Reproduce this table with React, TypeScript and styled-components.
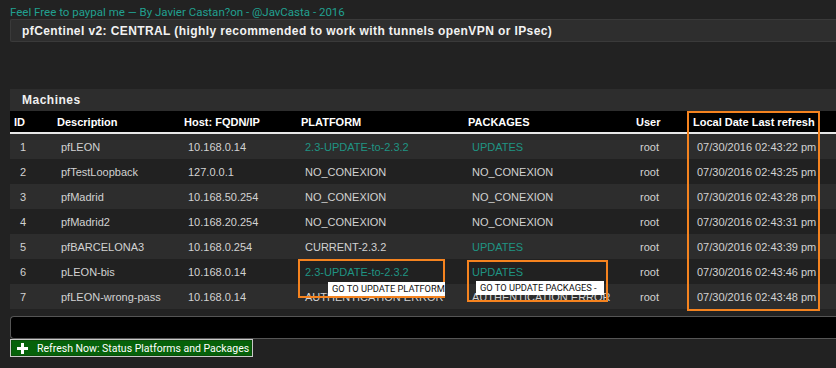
import React from 'react';
import styled, { createGlobalStyle } from 'styled-components';

const GlobalStyle = createGlobalStyle`
  html, body {
    margin: 0;
    padding: 0;
    background: #222222;
    overflow: hidden;
  }
  body {
    font-family: 'Liberation Sans', Arial, sans-serif;
    color: #d4d4d4;
  }
`;

const Page = styled.div`
  width: 836px;
  height: 368px;
  display: flex;
  flex-direction: column;
`;

const Credits = styled.div`
  font-family: Roboto, 'Liberation Sans', sans-serif;
  font-size: 11.5px;
  line-height: 13px;
  color: #21a090;
  padding: 6px 0 0 10px;
`;

const TitleBar = styled.div`
  margin-left: 10px;
  height: 21px;
  background: #2e2e2e;
  border: 1px solid #3a3a3a;
  border-right: none;
  border-radius: 2px 0 0 2px;
  display: flex;
  align-items: center;
  padding-left: 11px;
  font-size: 12px;
  font-weight: 700;
  letter-spacing: 0.4px;
  color: #f2f2f2;
  white-space: nowrap;
`;

const Panel = styled.div`
  position: relative;
  margin: 47px 0 0 10px;
  padding-bottom: 2px;
`;

const PanelHeading = styled.div`
  height: 22px;
  background: #2d2d2d;
  display: flex;
  align-items: center;
  padding-left: 12px;
  font-size: 12px;
  font-weight: 700;
  letter-spacing: 0.5px;
  color: #f0f0f0;
`;

const Table = styled.table`
  width: 100%;
  border-collapse: collapse;
  table-layout: fixed;
`;

const HeadCell = styled.th`
  background: #000;
  height: 21px;
  padding: 0 0 0 4px;
  text-align: left;
  font-size: 11px;
  font-weight: 700;
  color: #ffffff;
  border-bottom: 2px solid #e8e8e8;
  white-space: nowrap;
  overflow: hidden;
`;

const Row = styled.tr<{ $odd: boolean }>`
  background: ${({ $odd }) => ($odd ? '#2d2d2d' : '#212121')};
`;

const Cell = styled.td<{ $link?: boolean }>`
  height: 25px;
  padding: 0 0 0 8px;
  font-size: 11px;
  color: ${({ $link }) => ($link ? '#1f9483' : '#d2d2d2')};
  white-space: nowrap;
  overflow: hidden;
  &:first-child {
    padding-left: 10px;
  }
`;

const Highlight = styled.div`
  position: absolute;
  border: 2px solid #f5831f;
  box-sizing: border-box;
  pointer-events: none;
`;

const Tip = styled.div`
  position: absolute;
  background: #ffffff;
  color: #111;
  font-family: Roboto, 'Liberation Sans', sans-serif;
  font-size: 9.3px;
  line-height: 14px;
  padding: 0 0 0 4px;
  box-sizing: border-box;
  white-space: nowrap;
  overflow: hidden;
`;

const LogBox = styled.div`
  margin: 5px 0 0 10px;
  height: 21px;
  background: #000;
  border: 1px solid #555;
  border-right: none;
  border-radius: 4px 0 0 4px;
`;

const RefreshButton = styled.button`
  margin-left: 10px;
  align-self: flex-start;
  width: 243px;
  height: 18px;
  padding: 0 0 0 6px;
  display: flex;
  align-items: center;
  gap: 9px;
  background: #06620a;
  border: 1px solid #c9c9c9;
  box-shadow: inset 0 0 0 1px #0a4f0a;
  color: #ffffff;
  font-family: Roboto, 'Liberation Sans', sans-serif;
  font-size: 10.5px;
  white-space: nowrap;
  cursor: pointer;

  svg {
    flex-shrink: 0;
  }
`;

const PlusIcon = () => (
  <svg width="11" height="11" viewBox="0 0 11 11">
    <rect x="4" y="0" width="3" height="11" fill="#fff" />
    <rect x="0" y="4" width="11" height="3" fill="#fff" />
  </svg>
);

type Machine = {
  id: number;
  name: string;
  host: string;
  platform: string;
  packages: string;
  date: string;
};

const machines: Machine[] = [
  { id: 1, name: 'pfLEON', host: '10.168.0.14', platform: '2.3-UPDATE-to-2.3.2', packages: 'UPDATES', date: '07/30/2016 02:43:22 pm' },
  { id: 2, name: 'pfTestLoopback', host: '127.0.0.1', platform: 'NO_CONEXION', packages: 'NO_CONEXION', date: '07/30/2016 02:43:25 pm' },
  { id: 3, name: 'pfMadrid', host: '10.168.50.254', platform: 'NO_CONEXION', packages: 'NO_CONEXION', date: '07/30/2016 02:43:28 pm' },
  { id: 4, name: 'pfMadrid2', host: '10.168.20.254', platform: 'NO_CONEXION', packages: 'NO_CONEXION', date: '07/30/2016 02:43:31 pm' },
  { id: 5, name: 'pfBARCELONA3', host: '10.168.0.254', platform: 'CURRENT-2.3.2', packages: 'UPDATES', date: '07/30/2016 02:43:39 pm' },
  { id: 6, name: 'pLEON-bis', host: '10.168.0.14', platform: '2.3-UPDATE-to-2.3.2', packages: 'UPDATES', date: '07/30/2016 02:43:46 pm' },
  { id: 7, name: 'pfLEON-wrong-pass', host: '10.168.0.14', platform: 'AUTHENTICATION ERROR', packages: 'AUTHENTICATION ERROR', date: '07/30/2016 02:43:48 pm' },
];

const isLink = (v: string) => v.includes('UPDATE');

const App: React.FC = () => (
  <Page>
    <GlobalStyle />
    <Credits>Feel Free to paypal me — By Javier Castan?on - @JavCasta - 2016</Credits>
    <TitleBar>pfCentinel v2: CENTRAL (highly recommended to work with tunnels openVPN or IPsec)</TitleBar>

    <Panel>
      <PanelHeading>Machines</PanelHeading>
      <Table>
        <colgroup>
          <col style={{ width: 43 }} />
          <col style={{ width: 127 }} />
          <col style={{ width: 117 }} />
          <col style={{ width: 167 }} />
          <col style={{ width: 168 }} />
          <col style={{ width: 57 }} />
          <col style={{ width: 133 }} />
          <col />
        </colgroup>
        <thead>
          <tr>
            <HeadCell>ID</HeadCell>
            <HeadCell>Description</HeadCell>
            <HeadCell>Host: FQDN/IP</HeadCell>
            <HeadCell>PLATFORM</HeadCell>
            <HeadCell>PACKAGES</HeadCell>
            <HeadCell>User</HeadCell>
            <HeadCell>Local Date Last refresh</HeadCell>
            <HeadCell />
          </tr>
        </thead>
        <tbody>
          {machines.map((m) => (
            <Row key={m.id} $odd={m.id % 2 === 1}>
              <Cell>{m.id}</Cell>
              <Cell>{m.name}</Cell>
              <Cell>{m.host}</Cell>
              <Cell $link={isLink(m.platform)}>{m.platform}</Cell>
              <Cell $link={isLink(m.packages)}>{m.packages}</Cell>
              <Cell>root</Cell>
              <Cell>{m.date}</Cell>
              <Cell />
            </Row>
          ))}
        </tbody>
      </Table>

      {/* annotations drawn over the table */}
      <Highlight style={{ left: 677, top: 22, width: 133, height: 200 }} />
      <Highlight style={{ left: 288, top: 170, width: 147, height: 39 }} />
      <Highlight style={{ left: 457, top: 171, width: 141, height: 42 }} />
      <Tip style={{ left: 318, top: 193, width: 117 }}>GO TO UPDATE PLATFORM</Tip>
      <Tip style={{ left: 466, top: 192, width: 128 }}>GO TO UPDATE PACKAGES -</Tip>
    </Panel>

    <LogBox />
    <RefreshButton>
      <PlusIcon />
      Refresh Now: Status Platforms and Packages
    </RefreshButton>
  </Page>
);

export default App;
